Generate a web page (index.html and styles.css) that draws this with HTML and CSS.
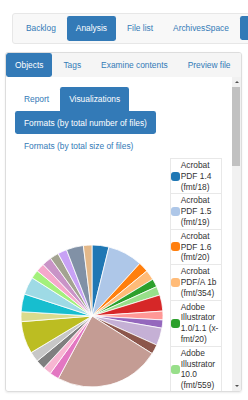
FILE: index.html
```html
<!DOCTYPE html>
<html>
<head>
<meta charset="utf-8">
<link rel="stylesheet" href="styles.css">
</head>
<body>
<nav class="topnav">
  <a class="pill">Backlog</a>
  <a class="pill active">Analysis</a>
  <a class="pill">File list</a>
  <a class="pill">ArchivesSpace</a>
  <a class="pill active blank"></a>
</nav>
<div class="panel">
  <div class="panel-tabs">
    <a class="pill active">Objects</a>
    <a class="pill">Tags</a>
    <a class="pill">Examine contents</a>
    <a class="pill">Preview file</a>
  </div>
  <div class="panel-body">
    <div class="scroll-content">
      <div class="subtabs">
        <a class="pill">Report</a>
        <a class="pill active top">Visualizations</a>
      </div>
      <div class="stacked">
        <a class="pill active first">Formats (by total number of files)</a>
        <a class="pill">Formats (by total size of files)</a>
      </div>
      <div class="chart">
        <svg class="pie" id="pie" width="155" height="240" viewBox="0 0 155 240"></svg>
        <table class="legend">
          <tr><td class="sw"><span class="swatch c1"></span></td><td class="label">Acrobat PDF 1.4 (fmt/18)</td></tr>
          <tr><td class="sw"><span class="swatch c2"></span></td><td class="label">Acrobat PDF 1.5 (fmt/19)</td></tr>
          <tr><td class="sw"><span class="swatch c3"></span></td><td class="label">Acrobat PDF 1.6 (fmt/20)</td></tr>
          <tr><td class="sw"><span class="swatch c4"></span></td><td class="label">Acrobat PDF/A 1b (fmt/354)</td></tr>
          <tr><td class="sw"><span class="swatch c5"></span></td><td class="label">Adobe Illustrator 1.0/1.1 (x-fmt/20)</td></tr>
          <tr><td class="sw"><span class="swatch c6"></span></td><td class="label">Adobe Illustrator 10.0 (fmt/559)</td></tr>
          <tr><td class="sw"><span class="swatch c7"></span></td><td class="label">Adobe Illustrator 11.0 (fmt/560)</td></tr>
        </table>
      </div>
    </div>
    <div class="scrollbar">
      <div class="sb-btn"><span class="arrow-up"></span></div>
      <div class="sb-thumb"></div>
      <div class="sb-track"></div>
      <div class="sb-btn"><span class="arrow-down"></span></div>
    </div>
  </div>
</div>
<script src="script.js"></script>
</body>
</html>
```

FILE: styles.css
```css
html, body {
  margin: 0;
  padding: 0;
  background: #fff;
}
body {
  width: 248px;
  height: 400px;
  overflow: hidden;
  font-family: "Liberation Sans", Arial, sans-serif;
  font-size: 8.4px;
  line-height: 12px;
  color: #333;
}
.pill {
  display: block;
  padding: 6px 9px;
  line-height: 12px;
  white-space: nowrap;
  color: #337ab7;
  border-radius: 2.4px;
  text-decoration: none;
}
.pill.active {
  background: #337ab7;
  color: #fff;
}
.pill.blank {
  width: 30px;
  height: 12px;
}
.topnav {
  display: flex;
  gap: 2px;
  margin: 13px 0 0 12px;
  width: 320px;
  box-sizing: border-box;
  height: 31px;
  padding: 2px 4px;
  background: #f8f8f8;
  border: 1px solid #e7e7e7;
  border-radius: 3px;
}
.panel {
  margin: 8px 0 0 5px;
  width: 237px;
  height: 340px;
  box-sizing: border-box;
  border: 1px solid #ddd;
  border-radius: 3px;
  box-shadow: 0 1px 2px rgba(0, 0, 0, 0.08);
  display: flex;
  flex-direction: column;
  overflow: hidden;
}
.panel-tabs {
  display: flex;
  gap: 2px;
  height: 24px;
  flex: none;
  background: #f5f5f5;
}
.panel-body {
  flex: 1;
  display: flex;
  min-height: 0;
}
.scroll-content {
  flex: 1;
  overflow: hidden;
  padding: 10px 0 0 9px;
}
.subtabs {
  display: flex;
  gap: 2px;
}
.pill.top {
  border-radius: 2.4px 2.4px 0 0;
}
.stacked {
  display: flex;
  flex-direction: column;
  align-items: flex-start;
}
.stacked .first {
  padding-top: 5.5px;
  padding-bottom: 5.5px;
}
.chart {
  display: flex;
  align-items: flex-start;
}
.pie {
  display: block;
  flex: none;
}
.legend {
  border-collapse: collapse;
  border-left: 1px solid #e8e8e8;
  border-right: 1px solid #e8e8e8;
  flex: none;
}
.legend td {
  border-top: 1px solid #e8e8e8;
  padding: 0;
  vertical-align: middle;
}
.legend td.sw {
  width: 9px;
}
.legend td.label {
  width: 40px;
  padding: 1px 0 1px 0.7px;
  line-height: 10.8px;
  color: #333;
}
.swatch {
  display: block;
  width: 9px;
  height: 9px;
  border-radius: 3px;
}
.c1 { background: #1f77b4; }
.c2 { background: #aec7e8; }
.c3 { background: #ff7f0e; }
.c4 { background: #ffbb78; }
.c5 { background: #2ca02c; }
.c6 { background: #98df8a; }
.c7 { background: #d62728; }
.scrollbar {
  width: 9px;
  flex: none;
  display: flex;
  flex-direction: column;
  background: #f1f1f1;
}
.sb-btn {
  height: 10px;
  flex: none;
  display: flex;
  align-items: center;
  justify-content: center;
}
.arrow-up {
  width: 0;
  height: 0;
  border-left: 2px solid transparent;
  border-right: 2px solid transparent;
  border-bottom: 2px solid #505050;
}
.arrow-down {
  width: 0;
  height: 0;
  border-left: 2px solid transparent;
  border-right: 2px solid transparent;
  border-top: 2px solid #505050;
}
.sb-thumb {
  height: 79px;
  flex: none;
  margin: 0 1px 0 0;
  background: #c1c1c1;
}
.sb-track {
  flex: 1;
}
```

FILE: script.js
```js
(function () {
  var data = [
    [13.8, '#1f77b4'], [42.3, '#aec7e8'], [50.6, '#ff7f0e'], [58.9, '#ffbb78'],
    [65.6, '#2ca02c'], [72.8, '#98df8a'], [86, '#d62728'], [93.2, '#ff9896'],
    [99.9, '#9467bd'], [114.2, '#c5b0d5'], [122, '#8c564b'], [208.3, '#c49c94'],
    [216, '#e377c2'], [222.8, '#f7b6d2'], [230.6, '#7f7f7f'], [239, '#c7c7c7'],
    [265.4, '#bcbd22'], [273.5, '#dbdb8d'], [288, '#17becf'], [302.5, '#9edae5'],
    [309.5, '#a3f07c'], [316.5, '#f5a8cb'], [324.3, '#c994c7'], [331.5, '#a3a391'],
    [339, '#c8a2f5'], [353, '#8191a6'], [360, '#e3b889']
  ];
  var svg = document.getElementById('pie');
  var ns = 'http://www.w3.org/2000/svg';
  var cx = 77, cy = 158, r = 71, start = 0;
  data.forEach(function (d) {
    var a0 = start * Math.PI / 180, a1 = d[0] * Math.PI / 180;
    var x0 = cx + r * Math.sin(a0), y0 = cy - r * Math.cos(a0);
    var x1 = cx + r * Math.sin(a1), y1 = cy - r * Math.cos(a1);
    var large = (d[0] - start) > 180 ? 1 : 0;
    var p = document.createElementNS(ns, 'path');
    p.setAttribute('d', 'M' + cx + ',' + cy + 'L' + x0.toFixed(2) + ',' + y0.toFixed(2) +
      'A' + r + ',' + r + ' 0 ' + large + ' 1 ' + x1.toFixed(2) + ',' + y1.toFixed(2) + 'Z');
    p.setAttribute('fill', d[1]);
    p.setAttribute('stroke', '#fff');
    p.setAttribute('stroke-width', '0.8');
    svg.appendChild(p);
    start = d[0];
  });
})();
```
